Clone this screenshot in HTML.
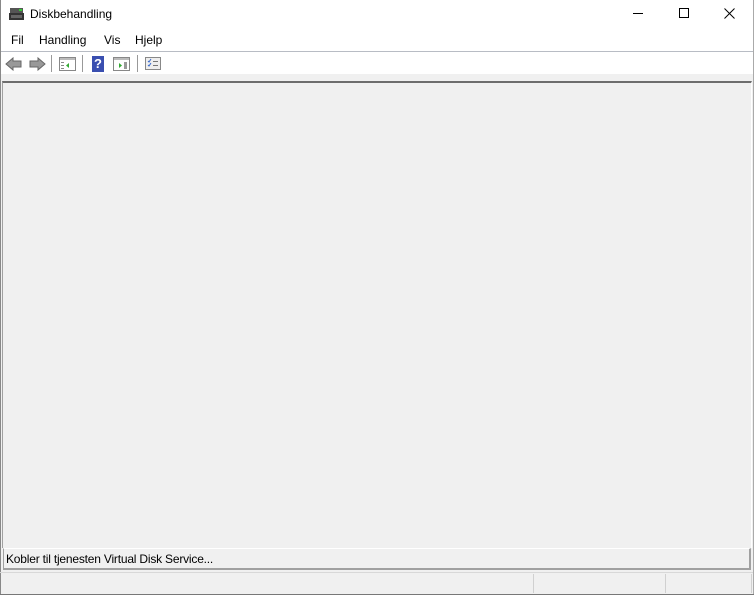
<!DOCTYPE html>
<html><head><style>
*{margin:0;padding:0;box-sizing:border-box}
body{width:754px;height:595px;overflow:hidden;background:#f0f0f0;font-family:"Segoe UI","Liberation Sans",sans-serif;font-size:12px;color:#000;position:relative}
.abs{position:absolute}
</style></head><body>
<div class="abs" style="left:0;top:0;width:754px;height:52px;background:#fff"></div>
<svg class="abs" style="left:9px;top:7px" width="16" height="14" viewBox="0 0 16 14">
<rect x="1" y="1" width="13" height="5" fill="#555"/><rect x="0" y="6" width="15" height="7" fill="#333"/><rect x="2" y="8" width="11" height="3" fill="#666"/><rect x="10" y="2" width="3" height="2" fill="#3c3"/></svg>
<div class="abs" style="left:30px;top:7px;font-size:12px">Diskbehandling</div>
<div class="abs" style="left:633px;top:13px;width:10px;height:1px;background:#000"></div>
<div class="abs" style="left:679px;top:8px;width:10px;height:10px;border:1px solid #000"></div>
<svg class="abs" style="left:724px;top:8px" width="11" height="11"><path d="M0.5 0.5L10.5 10.5M10.5 0.5L0.5 10.5" stroke="#000" stroke-width="1"/></svg>
<div class="abs" style="left:11px;top:33px">Fil</div>
<div class="abs" style="left:39px;top:33px">Handling</div>
<div class="abs" style="left:104px;top:33px">Vis</div>
<div class="abs" style="left:135px;top:33px">Hjelp</div>
<div class="abs" style="left:0;top:51px;width:754px;height:1px;background:#b8bcc4"></div>
<div class="abs" style="left:0;top:52px;width:754px;height:22px;background:#fff"></div>
<svg class="abs" style="left:5px;top:57px" width="42" height="14"><path d="M1 7L8 1V4H16V10H8V13Z" fill="#999" stroke="#666"/><path d="M40 7L33 1V4H25V10H33V13Z" fill="#999" stroke="#666"/></svg>
<div class="abs" style="left:51px;top:55px;width:1px;height:17px;background:#999"></div>
<svg class="abs" style="left:59px;top:57px" width="18" height="15"><rect x="0.5" y="0.5" width="16" height="13" fill="#fff" stroke="#888"/><rect x="1" y="1" width="15" height="2" fill="#bbb"/><path d="M10 6L7 8.5L10 11Z" fill="#3a3"/><rect x="2" y="5" width="3" height="1" fill="#888"/><rect x="2" y="8" width="3" height="1" fill="#888"/><rect x="2" y="11" width="3" height="1" fill="#888"/></svg>
<div class="abs" style="left:82px;top:55px;width:1px;height:17px;background:#999"></div>
<div class="abs" style="left:92px;top:56px;width:12px;height:16px;background:#3a4fb0;color:#fff;font-weight:bold;font-size:13px;line-height:16px;text-align:center">?</div>
<svg class="abs" style="left:113px;top:57px" width="18" height="15"><rect x="0.5" y="0.5" width="16" height="13" fill="#fff" stroke="#888"/><rect x="1" y="1" width="15" height="2" fill="#bbb"/><path d="M6 6L9 8.5L6 11Z" fill="#3a3"/><rect x="11" y="5" width="3" height="7" fill="#999"/></svg>
<div class="abs" style="left:137px;top:55px;width:1px;height:17px;background:#999"></div>
<svg class="abs" style="left:145px;top:57px" width="17" height="14"><rect x="0.5" y="0.5" width="15" height="12" fill="#eee" stroke="#888"/><path d="M3 4L4 5L6 2M3 8L4 9L6 6" stroke="#36c" fill="none"/><rect x="8" y="4" width="5" height="1" fill="#777"/><rect x="8" y="8" width="5" height="1" fill="#777"/></svg>
<div class="abs" style="left:0;top:0;width:1px;height:595px;background:#888"></div>
<div class="abs" style="left:2px;top:81px;width:750px;height:467px;border-top:2px solid #6d6d6d;border-left:1px solid #a0a0a0;border-right:1px solid #fff;background:#f0f0f0"></div>
<div class="abs" style="left:3px;top:548px;width:748px;height:22px;border-top:1px solid #fff;border-left:1px solid #a0a0a0;border-right:2px solid #a0a0a0;border-bottom:2px solid #a0a0a0;background:#f0f0f0"></div>
<div class="abs" style="left:6px;top:552px;font-size:12px;letter-spacing:-0.2px">Kobler til tjenesten Virtual Disk Service...</div>
<div class="abs" style="left:0;top:572px;width:754px;height:1px;background:#d8d8d8"></div>
<div class="abs" style="left:533px;top:574px;width:1px;height:19px;background:#d0d0d0"></div>
<div class="abs" style="left:665px;top:574px;width:1px;height:19px;background:#d0d0d0"></div>
<div class="abs" style="left:751px;top:574px;width:1px;height:19px;background:#d0d0d0"></div>
<div class="abs" style="left:753px;top:0;width:1px;height:595px;background:#aaa"></div>
<div class="abs" style="left:0;top:594px;width:754px;height:1px;background:#777"></div>
</body></html>
